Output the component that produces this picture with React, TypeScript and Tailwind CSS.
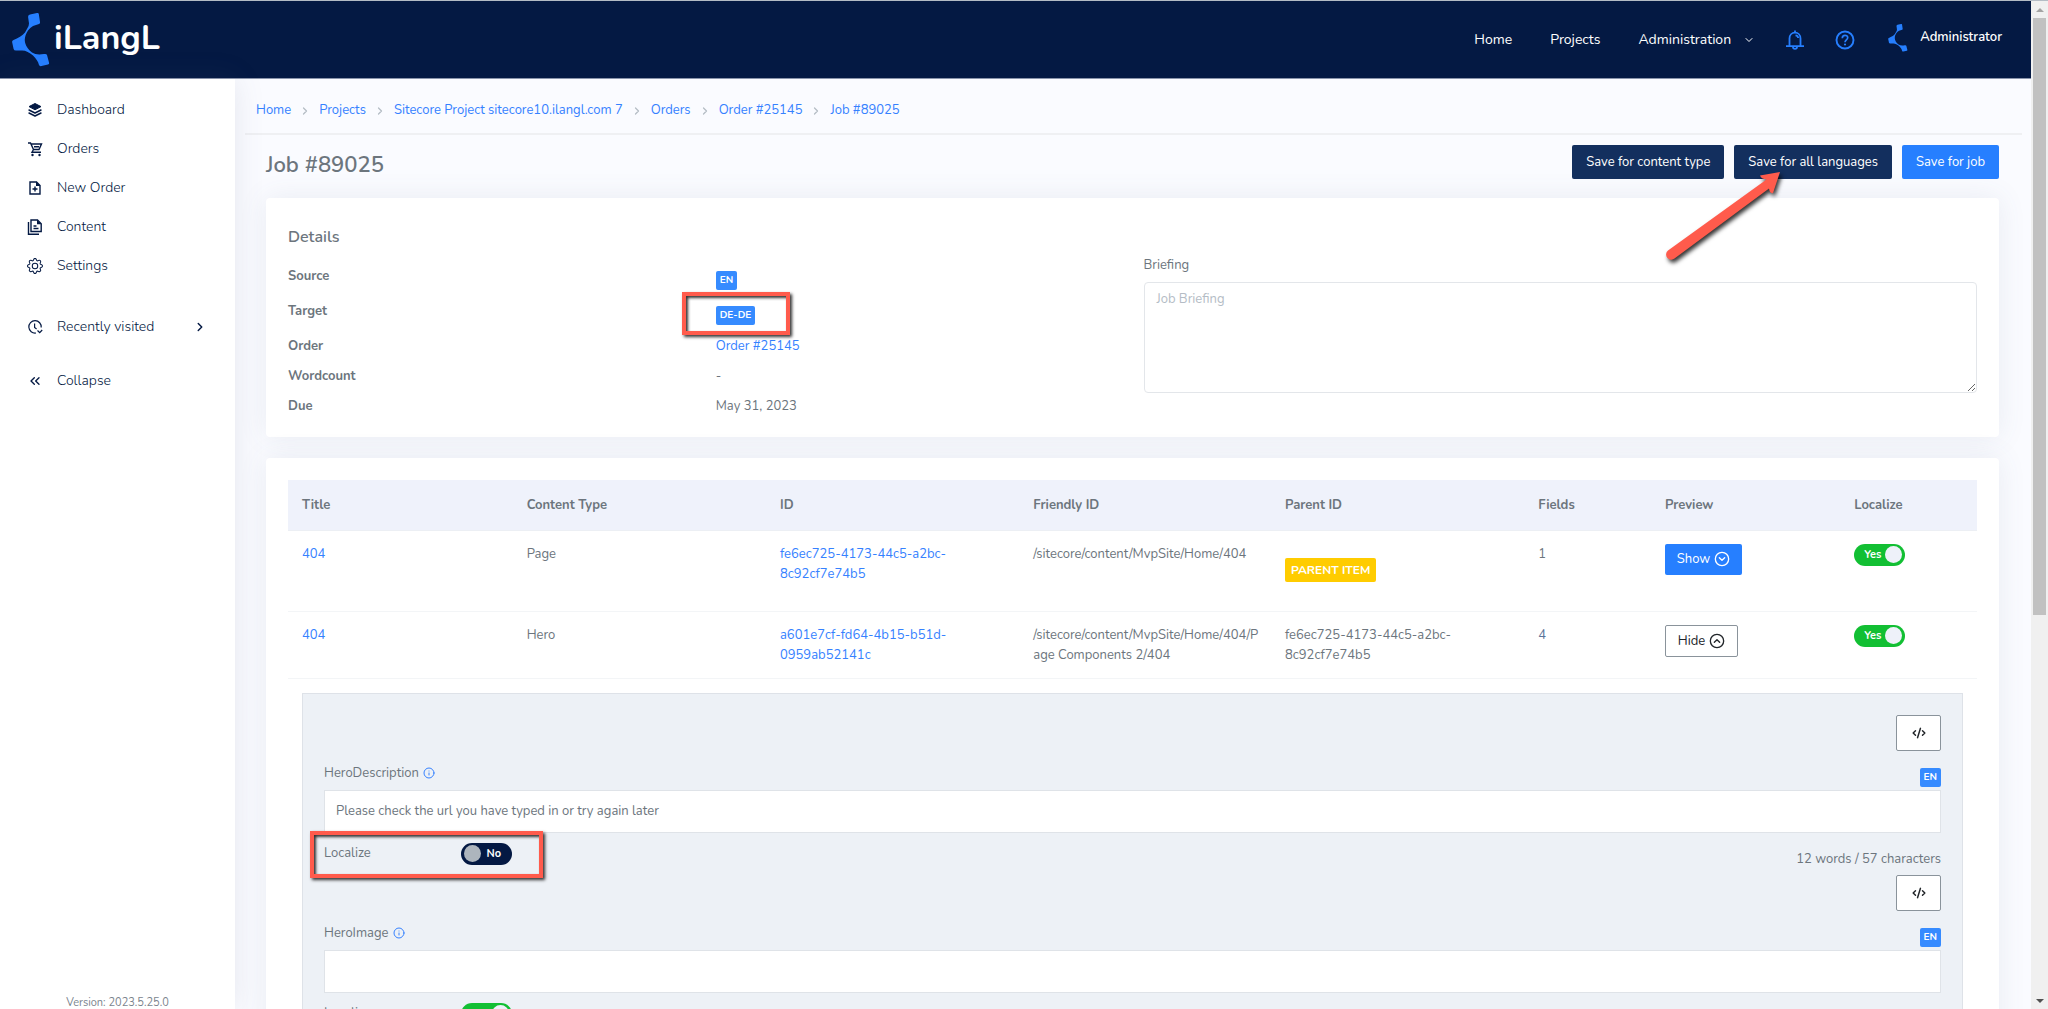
import React, { useState } from 'react';
import { ChevronDown, ChevronRight, ChevronsLeft, CircleChevronDown, CircleChevronUp, CodeXml, Info } from 'lucide-react';
import { BsGear } from 'react-icons/bs';

function LogoMark({ className }: { className: string }) {
  return (
    <svg viewBox="0 0 38 54" className={className} fill="#267fff" aria-hidden="true">
      <path d="M18 1.5 25 0Q26.5-.2 26.800 1L28 9Q28.200 10.500 27 11L21 13Q18 14.500 16 17.500C14 20.500 12.600 24 12.800 27.500C13 32 16 36.500 20 39.500C23 41.500 27 42 32 41Q34.500 40.500 35 42L37 49.500Q37.500 51 36 51.500L29.500 53Q27.500 53.500 27 52C26 48 24 45.500 21 42.500C17.500 39.500 14 37.500 10 37.500L4 37.500Q2 37.500 1.600 36L.1 29Q0 27.500 1.500 27C6 25 10.500 23 13 19.500L15.500 15Q17.500 12 16.800 9L16.100 4Q16 2 18 1.500Z" />
    </svg>
  );
}

const line = { fill: 'none', stroke: 'currentColor', strokeWidth: 1.4 };

function LayersIcon() {
  return (
    <svg viewBox="0 0 16 16" className="size-4" aria-hidden="true">
      <path d="M8 1.500 14 4.600 8 7.800 2 4.600Z" fill="currentColor" stroke="currentColor" strokeLinejoin="round" />
      <path d="m2 8 6 3 6-3M2 11l6 3 6-3" {...line} strokeLinecap="round" strokeLinejoin="round" />
    </svg>
  );
}
function CartIcon() {
  return (
    <svg viewBox="0 0 16 16" className="size-4" aria-hidden="true">
      <path d="M1 2h2.500l3 6.500h5.500L14.500 3H4M6.500 8.500 5 11.200h9M7 5.700h5" {...line} />
      <circle cx="5.500" cy="14" r="1.200" fill="currentColor" />
      <circle cx="12.500" cy="14" r="1.200" fill="currentColor" />
    </svg>
  );
}
function NewFileIcon() {
  return (
    <svg viewBox="0 0 16 16" className="size-4" aria-hidden="true">
      <path d="M3 2h6.500L13 5.500V14H3ZM8 6.500v5M5.500 9h5" {...line} />
      <path d="M9 1.500v4.500h4.500Z" fill="currentColor" />
    </svg>
  );
}
function FilesIcon() {
  return (
    <svg viewBox="0 0 16 16" className="size-4" aria-hidden="true">
      <path d="M4 1h6.500L14.200 4.700V12.500H4ZM1.500 3v12.200H12M6.500 7h3M6.500 9.500h5" {...line} />
      <path d="M10 .8v4.400h4.400Z" fill="currentColor" />
    </svg>
  );
}
function RecentIcon() {
  return (
    <svg viewBox="0 0 16 16" className="size-4" aria-hidden="true">
      <path d="M9 14A6.200 6.200 0 1 1 14.200 8.500M7.600 4.500v4l2 1.500M10.500 11.500l2.200 2.200 2.500-2.700" {...line} strokeWidth={1.200} />
    </svg>
  );
}
function BellIcon() {
  return (
    <svg viewBox="0 0 20 20" className="size-5 text-[#267fff]" aria-hidden="true">
      <path d="M10 .5v2M4.500 15.700V8.500C4.500 5 6.800 2.700 10 2.700s5.500 2.300 5.500 5.800v7.200M1 16.200h18M8 17c0 2.400 4 2.400 4 0M10.500 5.300c1.600.2 2.500 1.200 2.700 2.700" {...line} strokeWidth={1.800} />
    </svg>
  );
}
function HelpIcon() {
  return (
    <svg viewBox="0 0 20 20" className="size-5 text-[#267fff]" aria-hidden="true">
      <circle cx="10" cy="10" r="8.500" {...line} strokeWidth={1.900} />
      <path d="M7.300 8.200C7.300 4.300 12.800 4.600 12.700 7.800C12.600 9.800 10 9.900 10 12.200" {...line} strokeWidth={1.700} />
      <circle cx="10" cy="14.500" r="1.100" fill="currentColor" />
    </svg>
  );
}

function Badge({ children }: { children: string }) {
  return <span className="block h-[19px] w-fit rounded-xs bg-[#368bff] px-1 text-[10px] font-bold leading-[19px] text-white">{children}</span>;
}

function Toggle({ id, initial, label }: { id: string; initial: boolean; label: string }) {
  const [on, setOn] = useState(initial);
  return (
    <label htmlFor={id} className={`relative flex h-[22px] w-[51px] shrink-0 cursor-pointer items-center justify-between rounded-full text-[11px] font-bold text-white ${on ? 'flex-row-reverse bg-[#12bf33] pl-2.5 pr-[3px]' : 'bg-[#041943] pl-[3px] pr-[11px]'}`}>
      <input id={id} type="checkbox" role="switch" aria-label={label} checked={on} onChange={() => setOn(!on)} className="sr-only" />
      <span className={`size-[17px] rounded-full ${on ? 'bg-[#eef1f9]' : 'bg-[#adb5bd]'}`} />
      <span>{on ? 'Yes' : 'No'}</span>
    </label>
  );
}

function Highlight({ className }: { className: string }) {
  return <div aria-hidden="true" className={`pointer-events-none absolute border-4 border-[#ff5b4c] shadow-[2px_2px_3px_#333,inset_2px_2px_3px_#333] ${className}`} />;
}

const navItems = [
  { label: 'Dashboard', icon: <LayersIcon /> },
  { label: 'Orders', icon: <CartIcon /> },
  { label: 'New Order', icon: <NewFileIcon /> },
  { label: 'Content', icon: <FilesIcon /> },
  { label: 'Settings', icon: <BsGear className="size-4" /> },
];

const crumbs = ['Home', 'Projects', 'Sitecore Project sitecore10.ilangl.com 7', 'Orders', 'Order #25145', 'Job #89025'];

function Sidebar() {
  const item = 'flex h-[39px] w-full items-center gap-3.5 pl-[27px] pr-7 text-left';
  return (
    <nav className="relative z-10 flex w-[235px] shrink-0 flex-col bg-white pt-[11px] text-sm font-light text-[#041943] shadow-[0_0_28px_rgba(82,95,127,0.13)]">
      {navItems.map((n) => (
        <a key={n.label} href="#" className={item}>{n.icon}{n.label}</a>
      ))}
      <button type="button" className={`${item} mt-[22px]`}>
        <RecentIcon />
        <span className="flex-1">Recently visited</span>
        <ChevronRight className="size-3.5" strokeWidth={2.5} />
      </button>
      <button type="button" className={`${item} mt-[15px]`}><ChevronsLeft className="size-4" />Collapse</button>
      <p className="mt-auto text-center text-[11px] font-normal leading-3 text-[#7b848d]">Version: 2023.5.25.0</p>
    </nav>
  );
}

function Header() {
  return (
    <header className="flex h-[78px] shrink-0 items-center border-b border-[#8a94ab] bg-[#041943] pl-3 pr-[29px] text-sm text-white">
      <a href="#" aria-label="iLangL" className="flex items-center gap-1">
        <LogoMark className="h-[54px] w-[38px]" />
        <span className="pb-1 text-[34px] font-bold leading-none">iLangL</span>
      </a>
      <nav className="ml-auto flex items-center">
        <a href="#" className="mr-[38px]">Home</a>
        <a href="#" className="mr-[38px]">Projects</a>
        <button type="button" className="mr-[30px] flex items-center gap-3">Administration<ChevronDown className="size-3" /></button>
        <button type="button" aria-label="Notifications" className="mr-[30px]"><BellIcon /></button>
        <button type="button" aria-label="Help" className="mr-[33px]"><HelpIcon /></button>
        <a href="#" className="flex items-center gap-3 pb-1 text-[13px] font-semibold">
          <LogoMark className="h-7 w-5" />Administrator
        </a>
      </nav>
    </header>
  );
}

function Arrow() {
  return (
    <svg aria-hidden="true" viewBox="0 0 120 100" className="pointer-events-none absolute right-[244px] top-[34px] z-10 h-[100px] w-[120px] overflow-visible drop-shadow-[2px_3px_2px_rgba(0,0,0,0.8)]">
      <path d="M113 3 93 6.500Q94 10 99.500 10.500L1 81.500A5 5 0 0 0 7.500 89.500L102 19.500Q103 25 106 24Z" fill="#ff5b4c" />
    </svg>
  );
}

function DetailsCard() {
  const [briefing, setBriefing] = useState('');
  return (
    <section className="mb-[21px] grid min-h-[239px] grid-cols-2 gap-x-[22px] rounded bg-white px-[22px] pb-5 shadow-[0_0_28px_rgba(82,95,127,0.1)]">
      <div className="pt-[27px]">
        <h2 className="text-base font-semibold leading-6">Details</h2>
        <dl className="mt-[17px] grid grid-cols-2 gap-x-[22px] leading-5">
          <dt className="h-[35px] font-bold">Source</dt>
          <dd className="pt-[5px]"><Badge>EN</Badge></dd>
          <dt className="h-[35px] font-bold">Target</dt>
          <dd className="relative pt-[5px]"><Badge>DE-DE</Badge><Highlight className="-left-[34px] -top-[9px] h-[43px] w-[108px]" /></dd>
          <dt className="h-[30px] font-bold">Order</dt>
          <dd><a href="#" className="text-[#3581ff]">Order #25145</a></dd>
          <dt className="h-[30px] font-bold">Wordcount</dt>
          <dd>-</dd>
          <dt className="font-bold">Due</dt>
          <dd>May 31, 2023</dd>
        </dl>
      </div>
      <div className="flex flex-col pt-[57px]">
        <label htmlFor="briefing" className="mb-[7px] leading-5">Briefing</label>
        <textarea id="briefing" value={briefing} onChange={(e) => setBriefing(e.target.value)} placeholder="Job Briefing" className="h-[111px] w-full resize rounded border border-[#e3e6ea] px-3 py-1.5 leading-5 placeholder:text-[#b4bcc5]" />
      </div>
    </section>
  );
}

const fields = [
  { name: 'HeroDescription', value: 'Please check the url you have typed in or try again later', localize: false, count: '12 words / 57 characters' },
  { name: 'HeroImage', value: '', localize: true, count: '' },
];

function Field({ name, value, localize, count }: (typeof fields)[number]) {
  return (
    <div>
      <div className="flex justify-end">
        <button type="button" aria-label="Show source" className="flex h-9 w-[45px] items-center justify-center rounded-xs border border-[#8a939b] bg-white text-[#212529]">
          <CodeXml className="size-3.5" strokeWidth={2.5} />
        </button>
      </div>
      <div className="flex h-[39px] items-end justify-between pb-[3px]">
        <label htmlFor={name} className="flex items-center gap-1 leading-[27px]">{name}<Info className="size-3 text-[#3581ff]" /></label>
        <Badge>EN</Badge>
      </div>
      <input id={name} type="text" defaultValue={value} className="h-[43px] w-full border border-[#dfe3e8] bg-white px-[11px]" />
      <div className="relative flex h-[42px] items-start pt-2.5">
        <span className="w-[137px] leading-5">Localize</span>
        <Toggle id={`${name}-localize`} initial={localize} label={`Localize ${name}`} />
        <span className="ml-auto pt-1.5 leading-5">{count}</span>
        {!localize && <Highlight className="-left-3.5 -top-0.5 h-[47px] w-[233px]" />}
      </div>
    </div>
  );
}

function ContentTable() {
  const th = 'px-3.5 text-left font-bold';
  const td = 'px-3.5 pt-[13px] align-top';
  const link = 'text-[#3581ff]';
  return (
    <section className="rounded bg-white p-[22px] shadow-[0_0_28px_rgba(82,95,127,0.1)]">
      <table className="w-full table-fixed leading-5">
        <colgroup>
          <col className="w-[13.300%]" />
          <col className="w-[15%]" />
          <col className="w-[15%]" />
          <col className="w-[14.900%]" />
          <col className="w-[15%]" />
          <col className="w-[7.500%]" />
          <col className="w-[11.200%]" />
          <col />
        </colgroup>
        <thead>
          <tr className="h-[50px] border-b border-[#eceff4] bg-[#eff2fb]">
            {['Title', 'Content Type', 'ID', 'Friendly ID', 'Parent ID', 'Fields', 'Preview', 'Localize'].map((h) => (
              <th key={h} scope="col" className={th}>{h}</th>
            ))}
          </tr>
        </thead>
        <tbody>
          <tr className="h-[81px] border-b border-[#f3f5f7]">
            <td className={td}><a href="#" className={link}>404</a></td>
            <td className={td}>Page</td>
            <td className={td}><a href="#" className={link}>fe6ec725-4173-44c5-a2bc-<br />8c92cf7e74b5</a></td>
            <td className={`${td} whitespace-nowrap`}>/sitecore/content/MvpSite/Home/404</td>
            <td className={td}><span className="mt-3.5 block w-fit rounded-xs bg-[#ffcc00] px-1.5 py-0.5 text-xs/5 font-bold text-white">PARENT ITEM</span></td>
            <td className={td}>1</td>
            <td className={td}>
              <button type="button" className="flex h-[31px] w-[77px] items-center justify-center gap-1 rounded-xs bg-[#267fff] text-white">Show<CircleChevronDown className="size-4" /></button>
            </td>
            <td className={td}><Toggle id="row-1" initial label="Localize page" /></td>
          </tr>
          <tr className="h-[67px] border-b border-[#f3f5f7]">
            <td className={td}><a href="#" className={link}>404</a></td>
            <td className={td}>Hero</td>
            <td className={td}><a href="#" className={link}>a601e7cf-fd64-4b15-b51d-<br />0959ab52141c</a></td>
            <td className={`${td} whitespace-nowrap`}>/sitecore/content/MvpSite/Home/404/P<br />age Components 2/404</td>
            <td className={td}>fe6ec725-4173-44c5-a2bc-<br />8c92cf7e74b5</td>
            <td className={`${td} text-[#5b7399]`}>4</td>
            <td className={td}>
              <button type="button" className="flex h-8 w-[73px] items-center justify-center gap-1 rounded-xs border border-[#8a939b] bg-white text-[#212529]">Hide<CircleChevronUp className="size-4" /></button>
            </td>
            <td className={td}><Toggle id="row-2" initial label="Localize hero" /></td>
          </tr>
          <tr>
            <td colSpan={8} className="p-3.5">
              <div className="border border-[#dee2e8] bg-[#edf1f6] px-[21px] py-[21px]">
                {fields.map((f) => <Field key={f.name} {...f} />)}
              </div>
            </td>
          </tr>
        </tbody>
      </table>
    </section>
  );
}

export default function App() {
  const action = 'flex h-[34px] items-center rounded-xs px-3.5 pt-0.5 text-white';
  return (
    <div className="flex h-screen overflow-hidden border-t border-[#b4bcc5] bg-[#fafbff] font-['Nunito','Lato',sans-serif] text-[13px] text-[#6c757d]">
      <div className="flex min-w-0 flex-1 flex-col">
        <Header />
        <div className="flex min-h-0 flex-1">
          <Sidebar />
          <main className="min-w-0 flex-1 overflow-hidden">
            <nav aria-label="Breadcrumb" className="ml-2.5 mr-[9px] border-b-2 border-[#eff0f3] pl-[11px]">
              <ol className="flex h-[54px] items-center pt-2.5">
                {crumbs.map((c, i) => (
                  <li key={c} className="flex items-center">
                    {i > 0 && <ChevronRight className="mx-2 size-3 text-[#b4bcc5]" strokeWidth={2.5} />}
                    <a href="#" className="text-[#3581ff]">{c}</a>
                  </li>
                ))}
              </ol>
            </nav>
            <div className="relative pl-[31px] pr-8">
              <div className="mb-[9px] flex h-[54px] items-center justify-between">
                <h1 className="pt-1.5 text-[22px] font-semibold leading-7">Job #89025</h1>
                <div className="flex gap-2.5">
                  <button type="button" className={`${action} bg-[#132f5e]`}>Save for content type</button>
                  <button type="button" className={`${action} bg-[#132f5e]`}>Save for all languages</button>
                  <button type="button" className={`${action} bg-[#267fff]`}>Save for job</button>
                </div>
              </div>
              <Arrow />
              <DetailsCard />
              <ContentTable />
            </div>
          </main>
        </div>
      </div>
      <div aria-hidden="true" className="flex w-[17px] shrink-0 flex-col items-center justify-between bg-[#f0f0f0] px-0.5 pb-1.5 pt-[7px]">
        <div className="border-x-4 border-b-4 border-x-transparent border-b-[#a3a3a3]" />
        <div className="mt-1.5 h-[60%] w-full bg-[#c1c1c1]" />
        <div className="mt-auto border-x-4 border-t-4 border-x-transparent border-t-[#505050]" />
      </div>
    </div>
  );
}
